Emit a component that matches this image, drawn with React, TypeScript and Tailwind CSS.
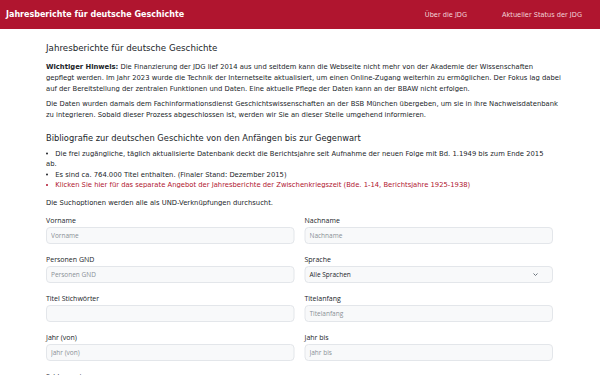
import React from "react";

// page is laid out at double size and scaled down to keep text metrics linear
const font = { fontFamily: '"DejaVu Sans", sans-serif' };
const formFont = { fontFamily: '"Open Sans", "DejaVu Sans", sans-serif' };

type FieldProps = {
	label: string;
	placeholder?: string;
};

function Field({ label, placeholder = "" }: FieldProps) {
	return (
		<div className="flex flex-col" style={formFont}>
			<label className="mb-[4px] text-[14px] font-medium leading-[18px] text-[#212529]">{label}</label>
			<input
				readOnly
				placeholder={placeholder}
				className="h-[34px] w-full rounded-[8px] border-2 border-[#e3e6ea] bg-[#f8f9fa] px-[8px] text-[13px] text-[#212529] outline-none placeholder:text-[#8a9096]"
			/>
		</div>
	);
}

function SelectField({ label, value }: { label: string; value: string }) {
	return (
		<div className="flex flex-col" style={formFont}>
			<label className="mb-[4px] text-[14px] font-medium leading-[18px] text-[#212529]">{label}</label>
			<div className="flex h-[34px] w-full items-center justify-between rounded-[8px] border-2 border-[#e3e6ea] bg-[#f8f9fa] px-[8px] text-[13px] font-medium text-[#212529]">
				<span>{value}</span>
				<svg width="10" height="6" viewBox="0 0 10 6" className="mr-[20px]">
					<path d="M1 1l4 4 4-4" fill="none" stroke="#6c757d" strokeWidth="2" />
				</svg>
			</div>
		</div>
	);
}

export default function App() {
	return (
		<div className="h-[375px] w-[600px] overflow-hidden bg-white">
			<div className="w-[1200px] origin-top-left scale-50 text-[#212529]" style={font}>
				<header className="flex h-[58px] items-center justify-between bg-[#b0152f] pl-[12px] pr-[36px]">
					<span className="text-[16px] font-bold text-white">Jahresberichte für deutsche Geschichte</span>
					<nav className="flex gap-[70px] text-[13.2px] text-[#f3d5da]">
						<span>Über die JDG</span>
						<span>Aktueller Status der JDG</span>
					</nav>
				</header>

				<main className="pl-[92px] pr-[78px] pt-[24px]">
					<h1 className="text-[17.4px] leading-[28px]">Jahresberichte für deutsche Geschichte</h1>

					<p className="mt-[11px] text-[13.6px] leading-[22px]">
						<b>Wichtiger Hinweis:</b> Die Finanzierung der JDG lief 2014 aus und seitdem kann die Webseite nicht mehr von der Akademie der Wissenschaften gepflegt werden. Im Jahr 2023 wurde die Technik der Internetseite aktualisiert, um einen Online-Zugang weiterhin zu ermöglichen. Der Fokus lag dabei auf der Bereitstellung der zentralen Funktionen und Daten. Eine aktuelle Pflege der Daten kann an der BBAW nicht erfolgen.
					</p>
					<p className="mt-[8px] text-[13.6px] leading-[22px]">
						Die Daten wurden damals dem Fachinformationsdienst Geschichtswissenschaften an der BSB München übergeben, um sie in ihre Nachweisdatenbank zu integrieren. Sobald dieser Prozess abgeschlossen ist, werden wir Sie an dieser Stelle umgehend informieren.
					</p>

					<h2 className="mt-[25px] text-[16.6px] leading-[24px]">Bibliografie zur deutschen Geschichte von den Anfängen bis zur Gegenwart</h2>
					<ul className="mr-[16px] mt-[7.5px] list-inside list-disc text-[13.6px] leading-[21px]">
						<li>Die frei zugängliche, täglich aktualisierte Datenbank deckt die Berichtsjahre seit Aufnahme der neuen Folge mit Bd. 1.1949 bis zum Ende 2015 ab.</li>
						<li>Es sind ca. 764.000 Titel enthalten. (Finaler Stand: Dezember 2015)</li>
						<li className="text-[#b0152f]">Klicken Sie hier für das separate Angebot der Jahresberichte der Zwischenkriegszeit (Bde. 1-14, Berichtsjahre 1925-1938)</li>
					</ul>

					<p className="mt-[13.5px] text-[13.6px] leading-[22px]">Die Suchoptionen werden alle als UND-Verknüpfungen durchsucht.</p>

					<div className="mr-[16px] mt-[17px] grid grid-cols-2 gap-x-[20px] gap-y-[22px]">
						<Field label="Vorname" placeholder="Vorname" />
						<Field label="Nachname" placeholder="Nachname" />
						<Field label="Personen GND" placeholder="Personen GND" />
						<SelectField label="Sprache" value="Alle Sprachen" />
						<Field label="Titel Stichwörter" />
						<Field label="Titelanfang" placeholder="Titelanfang" />
						<Field label="Jahr (von)" placeholder="Jahr (von)" />
						<Field label="Jahr bis" placeholder="Jahr bis" />
						<Field label="Schlagworte" placeholder="Schlagworte" />
					</div>
				</main>
			</div>
		</div>
	);
}
